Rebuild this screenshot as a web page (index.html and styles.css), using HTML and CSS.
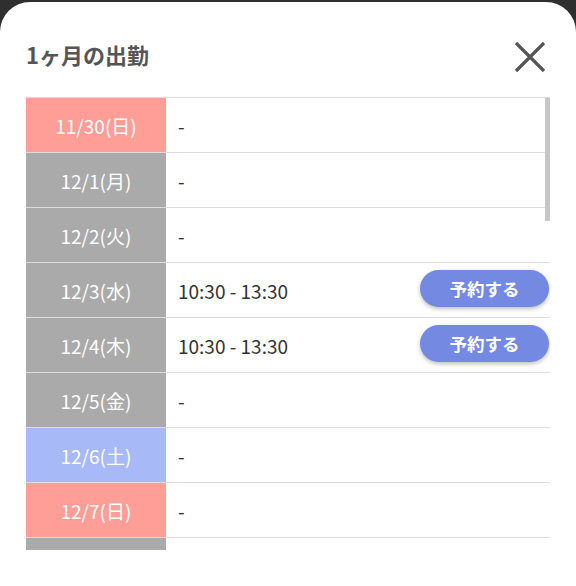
FILE: index.html
```html
<!DOCTYPE html>
<html lang="ja">
<head>
<meta charset="utf-8">
<link rel="stylesheet" href="styles.css">
</head>
<body>
<div class="card">
  <div class="header">
    <h1 class="title">1ヶ月の出勤</h1>
    <svg class="close" viewBox="0 0 32 32" width="32" height="32"><path d="M2 2 L30 30 M30 2 L2 30" stroke="#555" stroke-width="3.2" fill="none"/></svg>
  </div>
  <div class="list">
    <div class="row"><div class="date sun">11/30(日)</div><div class="info">-</div></div>
    <div class="row"><div class="date">12/1(月)</div><div class="info">-</div></div>
    <div class="row"><div class="date">12/2(火)</div><div class="info">-</div></div>
    <div class="row"><div class="date">12/3(水)</div><div class="info"><span>10:30 - 13:30</span><button class="book">予約する</button></div></div>
    <div class="row"><div class="date">12/4(木)</div><div class="info"><span>10:30 - 13:30</span><button class="book">予約する</button></div></div>
    <div class="row"><div class="date">12/5(金)</div><div class="info">-</div></div>
    <div class="row"><div class="date sat">12/6(土)</div><div class="info">-</div></div>
    <div class="row"><div class="date sun">12/7(日)</div><div class="info">-</div></div>
    <div class="row"><div class="date"></div><div class="info"></div></div>
    <div class="thumb"></div>
  </div>
</div>
</body>
</html>
```
FILE: styles.css
```css
html, body {
  margin: 0;
  padding: 0;
  background: #2f2f2f;
  font-family: "Noto Sans CJK JP", "Noto Sans", sans-serif;
}
.card {
  margin-top: 2px;
  height: 584px;
  background: #fff;
  border-radius: 30px 30px 0 0;
  padding: 0 26px;
  box-sizing: border-box;
  overflow: hidden;
}
.header {
  display: flex;
  align-items: center;
  justify-content: space-between;
  padding-top: 36px;
  height: 38px;
  margin-bottom: 21px;
  padding-right: 4px;
}
.title {
  margin: 0;
  padding-bottom: 5px;
  font-size: 22px;
  font-weight: 700;
  color: #555;
  line-height: 33px;
}
.close {
  display: block;
}
.list {
  position: relative;
  height: 452px;
  overflow: hidden;
  border-top: 1px solid #ddd;
}
.row {
  display: flex;
  height: 55px;
  box-sizing: border-box;
  border-bottom: 1px solid #ddd;
}
.date {
  width: 140px;
  flex: none;
  background: #aaaaaa;
  color: #fff;
  font-size: 19px;
  display: flex;
  align-items: center;
  justify-content: center;
}
.date.sun { background: #ff9d97; }
.date.sat { background: #a8b9f8; }
.info {
  flex: 1;
  display: flex;
  align-items: center;
  padding: 0 1px 0 12px;
  font-size: 19px;
  color: #333;
}
.book {
  margin-left: auto;
  margin-bottom: 3px;
  width: 129px;
  height: 37px;
  border: none;
  border-radius: 19px;
  background: #7389e2;
  color: #fff;
  font-family: inherit;
  font-size: 17.5px;
  font-weight: 700;
  box-shadow: 0 2px 4px rgba(0,0,0,0.25);
}
.thumb {
  position: absolute;
  right: 0;
  top: 0;
  width: 5px;
  height: 123px;
  background: #c6c6c6;
}
```
